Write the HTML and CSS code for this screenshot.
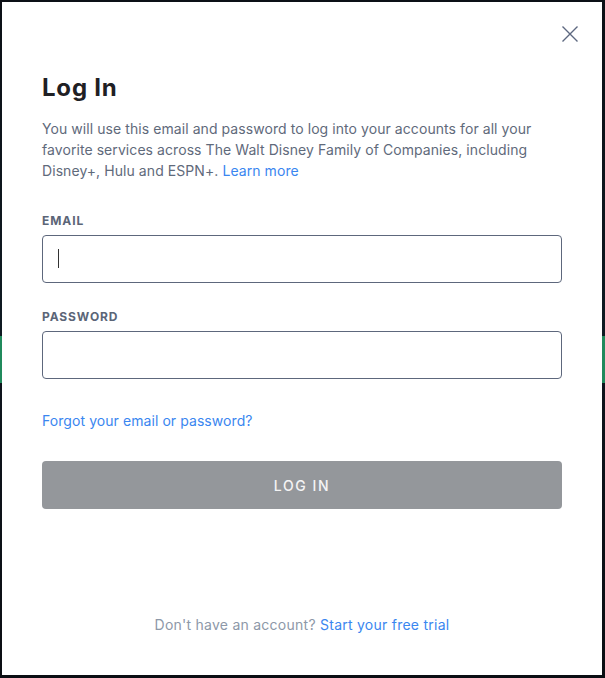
FILE: index.html
```html
<!DOCTYPE html>
<html lang="en">
<head>
  <meta charset="UTF-8">
  <meta name="viewport" content="width=device-width, initial-scale=1.0">
  <title>Log In</title>
  <link rel="stylesheet" href="styles.css">
</head>
<body>

  <div class="modal">
    <button class="close" aria-label="Close">
      <svg width="16" height="16" viewBox="0 0 16 16">
        <path d="M0.5 0.5 L15.5 15.5 M15.5 0.5 L0.5 15.5" stroke="#5d6880" stroke-width="1.4" fill="none"/>
      </svg>
    </button>

    <h1>Log In</h1>
    <p class="intro">
      You will use this email and password to log into your accounts for all your
      favorite services across The Walt Disney Family of Companies, including
      Disney+, Hulu and ESPN+. <a href="#">Learn more</a>
    </p>

    <label class="label" for="email">Email</label>
    <div class="field focused">
      <input id="email" type="email" />
    </div>

    <label class="label pw" for="password">Password</label>
    <div class="field">
      <input id="password" type="password" />
    </div>

    <a class="forgot" href="#">Forgot your email or password?</a>

    <button class="submit">Log In</button>

    <p class="signup">Don't have an account? <a href="#">Start your free trial</a></p>
  </div>

</body>
</html>
```

FILE: styles.css
```css
body {
  margin: 0;
  padding: 2px;
  height: 678px;
  box-sizing: border-box;
  font-family: 'Inter', 'Noto Sans', sans-serif;
  background: linear-gradient(to bottom,
    #0c1016 0, #0f1a22 336px,
    #208a5c 336px, #208a5c 383px,
    #0e141c 383px, #0b0e13 100%);
}

.modal {
  position: relative;
  background: #fff;
  width: 600px;
  height: 673px;
  box-sizing: border-box;
  padding: 70px 40px 40px;
  display: flex;
  flex-direction: column;
}

.close {
  position: absolute;
  top: 24px;
  right: 24px;
  width: 16px;
  height: 16px;
  padding: 0;
  border: none;
  background: none;
  cursor: pointer;
}

.close svg {
  display: block;
}

h1 {
  margin: 0;
  font-size: 24px;
  line-height: 32px;
  font-weight: 700;
  letter-spacing: 0.8px;
  color: #1f2024;
}

.intro {
  margin: 14px 0 0;
  font-size: 14px;
  line-height: 21px;
  letter-spacing: 0.07px;
  color: #5f6a7b;
}

a {
  color: #3a86f0;
  text-decoration: none;
}

.label {
  margin-top: 32px;
  font-size: 12px;
  line-height: 16px;
  font-weight: 700;
  letter-spacing: 0.9px;
  text-transform: uppercase;
  color: #5b6577;
}

.label.pw {
  margin-top: 26px;
}

.field {
  position: relative;
  margin-top: 6px;
}

.field input {
  display: block;
  width: 100%;
  height: 48px;
  box-sizing: border-box;
  border: 1px solid #5d677c;
  border-radius: 4px;
  padding: 0 16px;
  font-size: 16px;
  font-family: inherit;
  outline: none;
}

.field.focused::after {
  content: "";
  position: absolute;
  left: 16px;
  top: 14px;
  width: 1px;
  height: 19px;
  background: #333;
}

.forgot {
  margin-top: 31px;
  font-size: 14px;
  line-height: 21px;
  letter-spacing: 0.07px;
  align-self: flex-start;
}

.submit {
  margin-top: 30px;
  height: 48px;
  border: none;
  border-radius: 4px;
  background: #94979b;
  color: #f4f4f5;
  font-family: inherit;
  font-size: 14px;
  font-weight: 500;
  letter-spacing: 1.6px;
  text-transform: uppercase;
}

.signup {
  margin: auto 0 0;
  text-align: center;
  font-size: 14px;
  line-height: 21px;
  letter-spacing: 0.25px;
  color: #8d98a8;
}
```
